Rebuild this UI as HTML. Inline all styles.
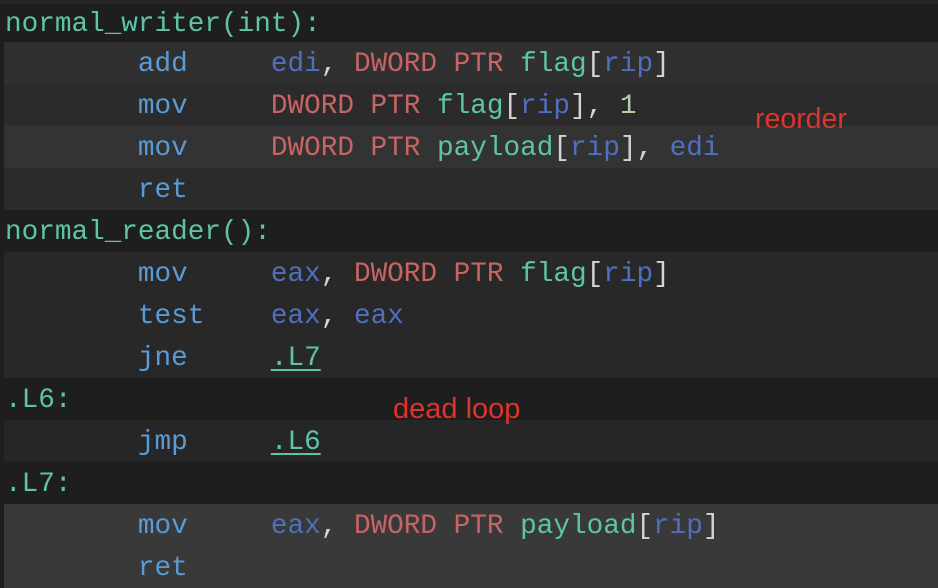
<!DOCTYPE html>
<html><head><meta charset="utf-8"><style>
html,body{margin:0;padding:0;background:#1e1e1e;width:938px;height:588px;overflow:hidden}
.r{position:relative;height:42px;line-height:46px;font-family:"Liberation Mono",monospace;font-size:27.7px;white-space:pre;color:#d4d4d4;padding-left:5px;box-sizing:border-box}
.lab{background:#1e1e1e}
.i{margin-left:4px;padding-left:1px}
.l{color:#5ec4a8}
.m{color:#5a9bd5}
.g{color:#4f6fbf}
.k{color:#c86464}
.n{color:#b5cea8}
.u{color:#5ec4a8;text-decoration:underline;text-underline-offset:4px}
.note{position:absolute;font-family:"Liberation Sans",sans-serif;color:#e0332d;line-height:1}
</style></head><body>
<div class="r lab" style="border-top:4px solid #262626;line-height:42px"><span class="l">normal_writer(int):</span></div>
<div class="r i" style="background:#303030">        <span class="m">add</span>     <span class="g">edi</span>, <span class="k">DWORD PTR</span> <span class="l">flag</span>[<span class="g">rip</span>]</div>
<div class="r i" style="background:#2b2b2b">        <span class="m">mov</span>     <span class="k">DWORD PTR</span> <span class="l">flag</span>[<span class="g">rip</span>], <span class="n">1</span></div>
<div class="r i" style="background:#333333">        <span class="m">mov</span>     <span class="k">DWORD PTR</span> <span class="l">payload</span>[<span class="g">rip</span>], <span class="g">edi</span></div>
<div class="r i" style="background:#2b2b2b">        <span class="m">ret</span></div>
<div class="r lab"><span class="l">normal_reader():</span></div>
<div class="r i" style="background:#282828">        <span class="m">mov</span>     <span class="g">eax</span>, <span class="k">DWORD PTR</span> <span class="l">flag</span>[<span class="g">rip</span>]</div>
<div class="r i" style="background:#282828">        <span class="m">test</span>    <span class="g">eax</span>, <span class="g">eax</span></div>
<div class="r i" style="background:#282828">        <span class="m">jne</span>     <span class="u">.L7</span></div>
<div class="r lab"><span class="l">.L6:</span></div>
<div class="r i" style="background:#262626">        <span class="m">jmp</span>     <span class="u">.L6</span></div>
<div class="r lab"><span class="l">.L7:</span></div>
<div class="r i" style="background:#393939">        <span class="m">mov</span>     <span class="g">eax</span>, <span class="k">DWORD PTR</span> <span class="l">payload</span>[<span class="g">rip</span>]</div>
<div class="r i" style="background:#393939">        <span class="m">ret</span></div>
<div class="note" style="left:755px;top:105px;font-size:28.5px">reorder</div>
<div class="note" style="left:393px;top:395px;font-size:29px">dead loop</div>
</body></html>
